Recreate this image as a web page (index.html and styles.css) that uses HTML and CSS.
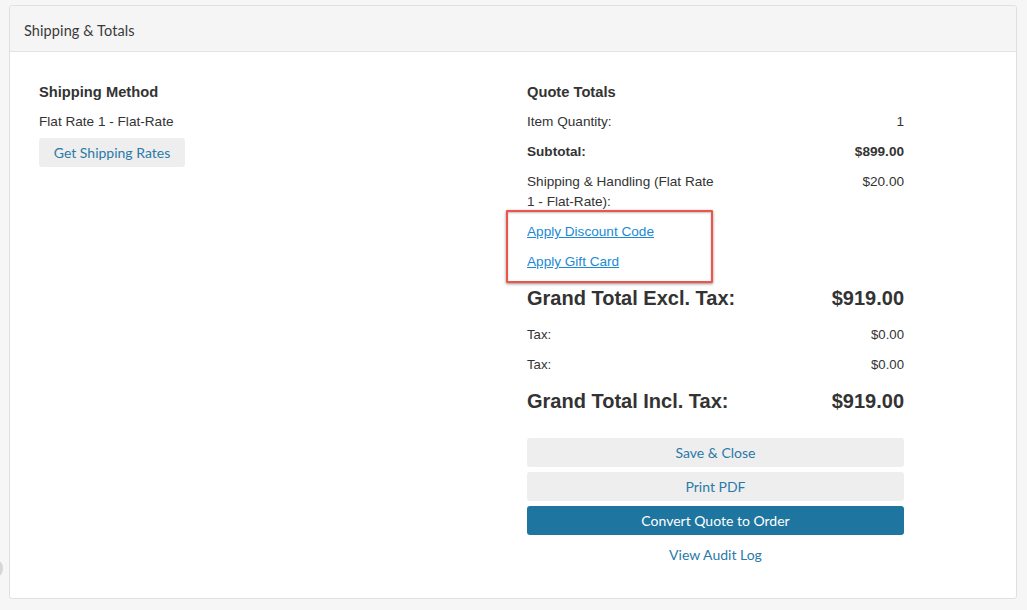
FILE: index.html
```html
<!DOCTYPE html>
<html>
<head>
<meta charset="utf-8">
<link rel="stylesheet" href="styles.css">
</head>
<body>
<div class="edge-knob"></div>
<section class="card">
  <header class="card-header">Shipping &amp; Totals</header>
  <div class="card-body">
    <div class="col-left">
      <h3 class="heading">Shipping Method</h3>
      <div class="line">Flat Rate 1 - Flat-Rate</div>
      <button class="btn btn-light btn-rates">Get Shipping Rates</button>
    </div>
    <div class="col-right">
      <h3 class="heading">Quote Totals</h3>
      <div class="row"><span class="label">Item Quantity:</span><span class="value">1</span></div>
      <div class="row bold"><span class="label">Subtotal:</span><span class="value">$899.00</span></div>
      <div class="row"><span class="label narrow">Shipping &amp; Handling (Flat Rate 1 - Flat-Rate):</span><span class="value">$20.00</span></div>
      <div class="links">
        <a class="link" href="#">Apply Discount Code</a>
        <a class="link" href="#">Apply Gift Card</a>
        <div class="highlight"></div>
      </div>
      <div class="row grand"><span class="label">Grand Total Excl. Tax:</span><span class="value">$919.00</span></div>
      <div class="row small"><span class="label">Tax:</span><span class="value">$0.00</span></div>
      <div class="row small"><span class="label">Tax:</span><span class="value">$0.00</span></div>
      <div class="row grand"><span class="label">Grand Total Incl. Tax:</span><span class="value">$919.00</span></div>
      <div class="actions">
        <button class="btn btn-light">Save &amp; Close</button>
        <button class="btn btn-light">Print PDF</button>
        <button class="btn btn-primary">Convert Quote to Order</button>
        <a class="audit" href="#">View Audit Log</a>
      </div>
    </div>
  </div>
</section>
</body>
</html>
```

FILE: styles.css
```css
html, body {
  margin: 0;
  padding: 0;
}
body {
  background: #f6f6f6;
  font-family: "Liberation Sans", Arial, sans-serif;
  color: #333;
  padding: 5px 10px 11px 9px;
  position: relative;
  min-height: 594px;
  box-sizing: border-box;
}
.edge-knob {
  position: absolute;
  left: -6px;
  top: 561px;
  width: 9px;
  height: 15px;
  border-radius: 50%;
  background: #d6d6d6;
}
.card {
  background: #fff;
  border: 1px solid #e0e0e0;
  border-radius: 3px;
  height: 594px;
  box-sizing: border-box;
  overflow: hidden;
}
.card-header {
  background: #f5f5f5;
  border-bottom: 1px solid #e3e3e3;
  height: 46px;
  box-sizing: border-box;
  padding: 3px 14px 0;
  display: flex;
  align-items: center;
  font-family: Lato, "Open Sans", sans-serif;
  font-size: 14.5px;
  color: #3a3a3a;
  letter-spacing: 0.1px;
}
.card-body {
  display: flex;
  padding: 30px 29px;
}
.col-left {
  width: 488px;
  flex: none;
}
.col-right {
  width: 377px;
  flex: none;
}
.heading {
  margin: 0 0 10px;
  font-size: 14.7px;
  line-height: 20px;
  font-weight: bold;
  color: #333;
}
.line {
  font-size: 13.6px;
  line-height: 20px;
}
.btn {
  display: block;
  border: none;
  border-radius: 3px;
  height: 29px;
  padding: 0 15px;
  font-family: Lato, "Open Sans", sans-serif;
  font-size: 14px;
  cursor: pointer;
}
.btn-light {
  background: #eeeeee;
  color: #2a7aa8;
}
.btn-primary {
  background: #1d75a0;
  color: #fff;
}
.btn-rates {
  margin-top: 6px;
  width: 146px;
  padding: 0;
}
.row {
  display: flex;
  justify-content: space-between;
  font-size: 13.6px;
  line-height: 20px;
  margin-bottom: 10px;
}
.row .label.narrow {
  width: 192px;
}
.row.bold {
  font-weight: bold;
}
.row.small {
  font-size: 13.2px;
}
.row.grand {
  font-size: 20px;
  font-weight: bold;
  line-height: 33px;
}
.links {
  position: relative;
  display: flex;
  flex-direction: column;
  gap: 10px;
  margin-bottom: 10px;
}
.link {
  color: #1a8ad4;
  font-size: 13.6px;
  line-height: 20px;
  text-decoration: underline;
  align-self: flex-start;
}
.highlight {
  position: absolute;
  left: -21px;
  top: -12px;
  width: 203px;
  height: 69px;
  border: 2px solid #ee5548;
  border-radius: 1px;
  box-shadow: 0 1px 3px rgba(0, 0, 0, 0.45), inset 0 1px 2px rgba(0, 0, 0, 0.25);
  pointer-events: none;
}
.actions {
  margin-top: 20px;
  display: flex;
  flex-direction: column;
  gap: 5px;
}
.actions .btn {
  width: 100%;
}
.audit {
  margin-top: 5px;
  text-align: center;
  font-family: Lato, "Open Sans", sans-serif;
  font-size: 14px;
  line-height: 20px;
  color: #2a7aa8;
  text-decoration: none;
}
```
